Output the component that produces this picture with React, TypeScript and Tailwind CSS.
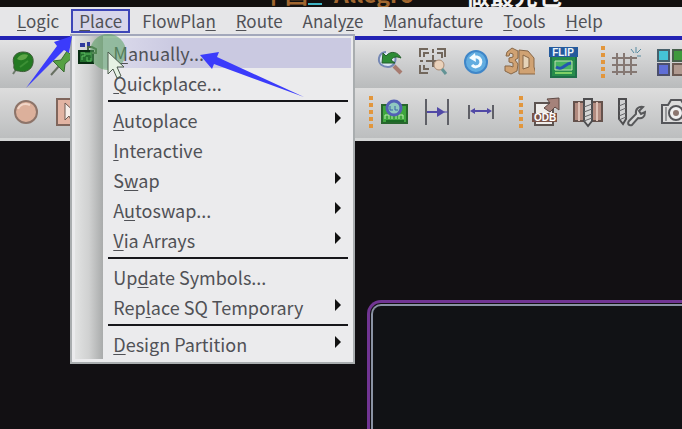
import type { ReactNode } from "react";

type Label = [string, string, string];
type Entry = { label: Label; sub?: boolean; active?: boolean };

const before: Label[] = [["", "L", "ogic"]];

const after: Label[] = [
  ["FlowPla", "n", ""],
  ["", "R", "oute"],
  ["Analy", "z", "e"],
  ["", "M", "anufacture"],
  ["", "T", "ools"],
  ["", "H", "elp"],
];

const groups: Entry[][] = [
  [{ label: ["", "M", "anually..."], active: true }, { label: ["", "Q", "uickplace..."] }],
  [
    { label: ["", "A", "utoplace"], sub: true },
    { label: ["", "I", "nteractive"] },
    { label: ["S", "w", "ap"], sub: true },
    { label: ["A", "u", "toswap..."], sub: true },
    { label: ["", "V", "ia Arrays"], sub: true },
  ],
  [{ label: ["Up", "d", "ate Symbols..."] }, { label: ["Rep", "l", "ace SQ Temporary"], sub: true }],
  [{ label: ["", "D", "esign Partition"], sub: true }],
];

function Mnemonic({ label }: { label: Label }) {
  return (
    <span className="whitespace-nowrap">
      {label[0]}
      <span className="underline decoration-1 underline-offset-2">{label[1]}</span>
      {label[2]}
    </span>
  );
}

function MenuButton({ label }: { label: Label }) {
  return (
    <button type="button" className="h-6 shrink-0 px-2.5 leading-6">
      <Mnemonic label={label} />
    </button>
  );
}

function MenuItem({ label, sub, active }: Entry) {
  return (
    <button
      type="button"
      role="menuitem"
      className={`flex h-[30px] w-full items-center justify-between pr-2.5 pl-2.5 text-left ${active ? "bg-linear-to-r from-[#dddcec] to-[#cac9e1] to-30%" : ""}`}
    >
      <Mnemonic label={label} />
      {sub && (
        <svg viewBox="0 0 6 16" className="h-4 w-1.5">
          <path d="M0 0 6 6 0 12z" fill="#111" />
        </svg>
      )}
    </button>
  );
}

function PlaceMenu() {
  return (
    <div
      role="menu"
      className="absolute top-full -left-px z-10 mt-px flex w-[285px] border-2 border-[#a9adaf] border-t-[#a3a8bb] bg-[#ebebed] pb-[3px] pl-[3px] text-[18px]"
    >
      <div className="w-7 shrink-0 bg-linear-to-r from-[#e2e3e3] via-[#d0d1d1] to-[#a9abab] pt-1.5 pl-[3px]">
        <svg viewBox="0 0 20 22" className="h-[22px] w-5" fill="none">
          <path d="M2 3h5m2-1h3" stroke="#303b9c" strokeWidth="4" />
          <path d="M1 9h14v12H1z" fill="#236f2d" stroke="#082d12" strokeWidth="2" />
          <path d="M3 11h4v3H4v4M8 12h5m-4 3v4h4v-3" stroke="#60c365" />
          <path d="M10 8V5h4l4 2v4h-4" stroke="#4c6746" strokeWidth="2" />
        </svg>
      </div>
      <div className="flex-1 pt-0.5 pr-0.5">
        {groups.map((entries, i) => (
          <div key={i}>
            {i > 0 && <div role="separator" className="mt-0.5 mr-[3px] mb-[3px] ml-[5px] h-0.5 bg-[#17171b]" />}
            {entries.map((entry) => (
              <MenuItem key={entry.label.join("")} {...entry} />
            ))}
          </div>
        ))}
      </div>
    </div>
  );
}

function Icon({ name, children }: { name: string; children: ReactNode }) {
  return (
    <button type="button" aria-label={name} className="h-8 w-8 shrink-0">
      <svg viewBox="0 0 32 32" className="block h-8 w-8" fill="none">
        {children}
      </svg>
    </button>
  );
}

function Grip() {
  return (
    <div className="flex w-1 shrink-0 flex-col gap-[3px]">
      {[0, 1, 2, 3, 4].map((n) => (
        <i key={n} className="h-1 w-1 bg-[#e2963c]" />
      ))}
    </div>
  );
}

function ViewTools() {
  return (
    <div className="flex h-12 items-center overflow-hidden bg-linear-to-b from-[#e2e2e3] to-[#b9bbbc] pb-1">
      <div className="flex w-[374px] shrink-0 gap-[7px] pl-[7px]">
        <Icon name="Place pin">
          <path d="M10 22 6 28" stroke="#6e7a6c" strokeWidth="2" />
          <path d="M7 19C4 10 10 6 16 6c8 0 11 5 10 11-1 7-8 10-14 8-3 0-6-1-5-6z" fill="#237a22" stroke="#3d5c37" />
          <path d="M10 13c2-4 7-6 11-4-1 4-6 7-11 4z" fill="#5ea647" />
          <path d="m13 21 8-6" stroke="#3c9035" strokeWidth="2" />
        </Icon>
        <Icon name="Unplace pin">
          <path d="M5 29 14 19" stroke="#687062" strokeWidth="2" />
          <path d="m7 15 8-1 6-9 6 6-8 7-1 8z" fill="#56a143" stroke="#3b6c34" />
        </Icon>
      </div>
      <div className="flex shrink-0 gap-[11px]">
        <Icon name="Zoom previous">
          <path d="m20 20 7 7" stroke="#a77b70" strokeWidth="4" />
          <path d="M20 8c4 7-1 13-6 13S4 18 5 12c1-4 4-6 7-6" fill="#dbe6f2" stroke="#7588b5" strokeWidth="2" />
          <path d="m8 17 1-10 3 3c5-6 12-4 15 2-5-2-8-1-10 2l4 3z" fill="#2c8c36" stroke="#245f2d" />
        </Icon>
        <Icon name="Zoom fit">
          <path
            d="M3 11V3h8M20 3h8v8M3 19v8h8M7 11V7h5M20 7h5v5M7 19v4h5M16 3v4M16 9v12M9 15h14M3 15h3"
            stroke="#72675c"
            strokeWidth="2"
          />
          <circle cx="22" cy="19" r="5" fill="#ead2bb" stroke="#a98a73" />
          <path d="m25 23 4 5" stroke="#629395" strokeWidth="3" />
        </Icon>
        <Icon name="Refresh">
          <circle cx="16" cy="16" r="11" fill="#62ade0" stroke="#3f86c8" strokeWidth="2" />
          <path d="M14 11h3a5 5 0 1 1-5 8" stroke="#f5fcff" strokeWidth="3" />
          <path d="m15 7-6 5 7 4z" fill="#f5fcff" />
        </Icon>
        <Icon name="3D view">
          <path
            d="M4 6 9 2l6 3v7l-3 2 3 4-1 7-6 3-6-3v-5h5l3 1v-4l-4-1v-4l4-1V8l-3-1-1 3H3zM16 4l9 1 6 7v9l2 7H16z"
            fill="#d0a273"
            stroke="#876747"
          />
          <path d="M20 9v14l6-2V12z" fill="#e6d3b8" stroke="#876747" />
        </Icon>
        <Icon name="Flip board">
          <path d="M5 10h25v21H5z" fill="#268c4b" stroke="#1f6f4a" strokeWidth="2" />
          <path d="M9 15h17v9H9z" fill="#49b461" stroke="#bfe0b0" />
          <path d="M10 21c7 4 8-3 15-4" stroke="#2455b0" strokeWidth="3" />
          <path d="M9 27h17" stroke="#7fd067" strokeWidth="2" />
          <path d="M3 1h29v10H3z" fill="#245a9c" />
          <text x="17" y="10" textAnchor="middle" fill="#edf5fb" fontFamily="Liberation Sans" fontSize="10" fontWeight="700">
            FLIP
          </text>
        </Icon>
      </div>
      <div className="flex shrink-0 items-center gap-1.5 pl-[23px]">
        <Grip />
        <div className="flex gap-3">
          <Icon name="Grid">
            <path d="M6 7v22M13 7v22M20 10v19M1 12h25M1 19h25M1 26h25" stroke="#857873" strokeWidth="2" />
            <path d="m20 3 3 4m2-6v6m5-4-4 4m0 3h4" stroke="#568ba0" />
          </Icon>
          <Icon name="Color layers">
            <path d="M3 4h11v11H3z" fill="#45c3d6" stroke="#47606b" strokeWidth="2" />
            <path d="M18 4h11v11H18z" fill="#3f9a3c" stroke="#47604b" strokeWidth="2" />
            <path d="M3 18h11v11H3z" fill="#5f6ed6" stroke="#4b4f6b" strokeWidth="2" />
            <path d="M18 18h11v11H18z" fill="#b09a90" stroke="#6b5a53" strokeWidth="2" />
          </Icon>
        </div>
      </div>
    </div>
  );
}

function OutputTools() {
  return (
    <div className="flex h-[50px] items-center overflow-hidden bg-linear-to-b from-[#dddddd] to-[#bcbebf] pb-0.5">
      <div className="flex w-[369px] shrink-0 gap-2.5 pl-2.5">
        <Icon name="Shape circle">
          <circle cx="16" cy="16" r="11" fill="#dcb09b" stroke="#8d7469" strokeWidth="2" />
          <path d="M8 13c2-5 7-6 12-4" stroke="#f1d6c8" strokeWidth="2" />
        </Icon>
        <Icon name="Shape select">
          <path d="M5 3h26v26H5z" fill="#e2b4a3" stroke="#80665c" strokeWidth="2" />
          <path d="M13 7v17l4-4 3 6 3-2-3-5h6z" fill="#f6eeea" stroke="#6c5a53" />
        </Icon>
      </div>
      <div className="flex shrink-0 items-center gap-[5px]">
        <Grip />
        <div className="flex gap-[11px]">
          <Icon name="Board view">
            <path d="M4 9h25v18H4z" fill="#3fa63e" stroke="#27662d" strokeWidth="2" />
            <path d="M7 23v-4h4v4m3 0v-4h4v4m3 0v-4h4v4" stroke="#b8ecaa" />
            <path d="M8 25h18" stroke="#1a6a24" strokeWidth="2" />
            <circle cx="16" cy="12" r="7" fill="#8fc9c0" stroke="#5360b5" strokeWidth="3" />
            <path d="M12 10v4h3m2-4v4h3" stroke="#3b63a8" />
          </Icon>
          <Icon name="Measure to edge">
            <path d="M5 3v26M27 3v26" stroke="#5f6067" strokeWidth="2" />
            <path d="M6 16h14" stroke="#5149a6" strokeWidth="2" />
            <path d="m16 11 8 5-8 5z" fill="#5149a6" />
            <path d="M23 16h4" stroke="#5149a6" />
          </Icon>
          <Icon name="Measure distance">
            <path d="M5 9v14M29 9v14" stroke="#5f6067" strokeWidth="2" />
            <path d="M8 15h18" stroke="#5149a6" strokeWidth="2" />
            <path d="m11 12-5 3 5 3zM23 12l5 3-5 3z" fill="#5149a6" />
          </Icon>
        </div>
      </div>
      <div className="flex shrink-0 items-center gap-1.5 pl-[23px]">
        <Grip />
        <div className="flex gap-[11px]">
          <Icon name="Export ODB">
            <path d="M6 7h18v22H6z" fill="#efedeb" stroke="#5c5350" strokeWidth="2" />
            <path d="m15 12 6-5-3-4 12-1v12l-4-3-5 5z" fill="#a5827a" stroke="#5f4a45" />
            <path d="M3 17h25v9H3z" fill="#7a5348" />
            <text x="16" y="25" textAnchor="middle" fill="#fff" fontFamily="Liberation Sans" fontSize="10" fontWeight="700">
              ODB
            </text>
          </Icon>
          <Icon name="Drill legend">
            <path d="M2 6h28v19H2z" fill="#b28b80" stroke="#65524c" strokeWidth="2" />
            <path d="M7 6v19M25 6v19" stroke="#dcc0b5" strokeWidth="2" />
            <path d="M12 3h8v22l-4 5-4-5z" fill="#d6d6d6" stroke="#4d4d4f" strokeWidth="2" />
            <path d="m12 11 8-3m-8 8 8-3m-8 8 8-3m-8 7 8-3" stroke="#66676a" />
          </Icon>
          <Icon name="Drill setup">
            <path d="M4 3h7v20l-3 5-4-5z" fill="#cfd0d1" stroke="#4d4d4f" strokeWidth="2" />
            <path d="m4 10 7-3m-7 8 7-3m-7 8 7-3m-7 7 7-3" stroke="#66676a" />
            <path
              d="m14 25 7-7c-1-5 3-8 7-7l-4 4 2 3 4-2c0 5-3 7-7 6l-6 7c-3 1-5-1-3-4z"
              fill="#d7d8d8"
              stroke="#58595b"
              strokeWidth="2"
            />
          </Icon>
          <Icon name="Snapshot">
            <path d="M4 9h6l3-5h10l3 5h5v18H4z" fill="#dcdcdc" stroke="#55565a" strokeWidth="2" />
            <circle cx="18" cy="17" r="7" fill="#efeff0" stroke="#55565a" strokeWidth="2" />
            <circle cx="18" cy="17" r="3" fill="#8b7670" />
            <path d="M8 11v14" stroke="#55565a" />
          </Icon>
        </div>
      </div>
    </div>
  );
}

function Annotations() {
  return (
    <svg viewBox="0 0 320 110" className="pointer-events-none absolute top-0 left-0 z-20 h-[110px] w-80">
      <circle cx="108" cy="52" r="18" fill="#58a060" fillOpacity="0.55" />
      <path d="M108 52v22l5-5 4 9 4-2-4-9h7z" fill="#e6f2e4" stroke="#4b5a4c" />
      <path d="m72 36-18 6 3 4-31 42 38-38 5 3z" fill="#3b3bfb" />
      <path d="m200 55 19-3-2 5 87 40-90-33-2 5z" fill="#3b3bfb" />
    </svg>
  );
}

export default function App() {
  return (
    <main className="relative flex min-h-screen flex-col overflow-hidden bg-[#121013] font-['Noto_Sans_CJK_SC','Noto_Sans',sans-serif] text-[17px] text-[#505156]">
      <header className="flex h-[7px] shrink-0 items-end overflow-hidden bg-[#12100f] pl-[262px] font-bold whitespace-nowrap">
        <p className="flex w-[204px] shrink-0 items-end pb-0.5 text-[23px] leading-none text-[#a0662f]">
          <span>中国</span>
          <i className="mr-3 h-0.5 w-3.5 bg-[#3fb4c4]" />
          <span>Allegro</span>
        </p>
        <p className="text-[24px] leading-none text-[#f2f2f2]">做最先包</p>
      </header>
      <nav className="flex h-[29px] shrink-0 items-start bg-[#e6e6e8] pt-0.5 pl-[7px]">
        {before.map((label) => (
          <MenuButton key={label[1]} label={label} />
        ))}
        <div className="relative mx-0.5 flex shrink-0">
          <button
            type="button"
            aria-haspopup="menu"
            aria-expanded="true"
            className="h-6 border-2 border-[#3d45b8] bg-[#d7d6ea] px-1.5 leading-5"
          >
            <Mnemonic label={["", "P", "lace"]} />
          </button>
          <PlaceMenu />
        </div>
        {after.map((label) => (
          <MenuButton key={label[1]} label={label} />
        ))}
      </nav>
      <div className="border-t-4 border-b-[3px] border-t-[#2323b4] border-b-[#d3d5d5]">
        <ViewTools />
        <OutputTools />
      </div>
      <section aria-label="Board canvas" className="flex flex-1 pt-[159px] pl-[367px]">
        <div className="flex flex-1 rounded-tl-[14px] border-t-[3px] border-l-[3px] border-[#713593] pt-px pl-px">
          <div className="flex-1 rounded-tl-[10px] border-t-2 border-l-2 border-[#8a93a4] bg-[#111215]" />
        </div>
      </section>
      <Annotations />
    </main>
  );
}
